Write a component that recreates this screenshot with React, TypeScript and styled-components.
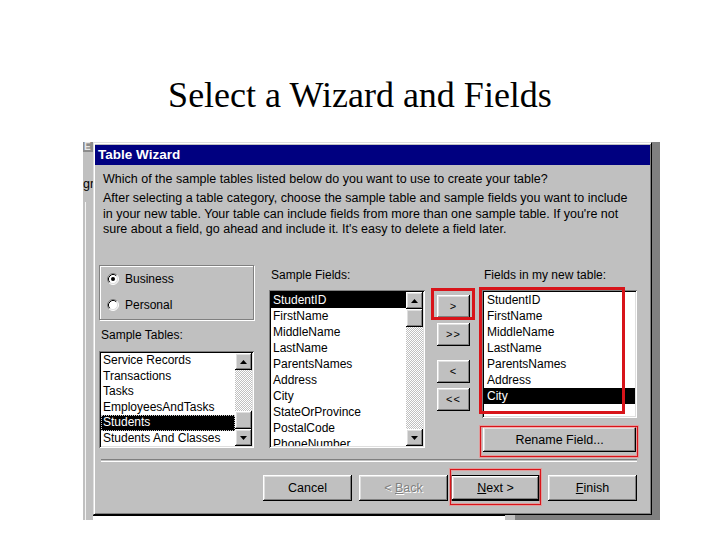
import React from 'react';
import styled, { createGlobalStyle } from 'styled-components';

const ui = `"Liberation Sans", Arial, sans-serif`;

const GlobalStyle = createGlobalStyle`
  html, body {
    margin: 0;
    background: #fff;
  }
`;

const raised = `
  box-shadow: inset -1px -1px #000, inset 1px 1px #fff, inset -2px -2px #808080, inset 2px 2px #dfdfdf;
`;

const sunken = `
  box-shadow: inset 1px 1px #808080, inset -1px -1px #fff, inset 2px 2px #000, inset -2px -2px #dfdfdf;
`;

const Slide = styled.div`
  width: 720px;
  height: 540px;
  overflow: hidden;
  background: #fff;
  display: flex;
  flex-direction: column;
`;

const Title = styled.h1`
  margin: 75px 0 0;
  height: 40px;
  font: 400 36px/40px "Liberation Serif", "Times New Roman", serif;
  color: #000;
  text-align: center;
`;

const Screen = styled.div`
  margin: 27px 0 0 83px;
  width: 577px;
  height: 378px;
  display: grid;
  grid-template-columns: 10px 559px 8px;
  grid-template-rows: 373px 5px;
`;

/* the window left behind the wizard */
const BgWindow = styled.div`
  grid-column: 1;
  grid-row: 1 / 3;
  background: #c0c0c0;
  display: flex;
  flex-direction: column;
  overflow: hidden;
  font-family: ${ui};
`;

const BgTitleBit = styled.div`
  height: 10px;
  background: #8c8c8c;
  color: #e8e8e8;
  font: 700 10px/10px ${ui};
  padding-left: 1px;
`;

const BgText = styled.div`
  margin-top: 25px;
  font-size: 12.5px;
  line-height: 15px;
  color: #000;
  white-space: nowrap;
`;

const BgEdge = styled.div`
  flex: 1;
  margin: 10px 0 0 2px;
  border-left: 1px solid #f4f4f4;
`;

const DarkStrip = styled.div`
  grid-column: 3;
  grid-row: 1 / 3;
  background: #808080;
`;

const UnderStrip = styled.div`
  grid-column: 2;
  grid-row: 2;
  display: flex;
`;

const UnderPiece = styled.div<{ $w?: number; $bg: string; $line?: boolean }>`
  ${(p) => (p.$w ? `width: ${p.$w}px;` : 'flex: 1;')}
  background: ${(p) => p.$bg};
  ${(p) => (p.$line ? 'border-top: 1px solid #000;' : '')}
`;

const Dialog = styled.div`
  grid-column: 2;
  grid-row: 1;
  box-sizing: border-box;
  display: flex;
  flex-direction: column;
  background: #c0c0c0;
  border: 1px solid;
  border-color: #dfdfdf #000 #000 #dfdfdf;
  box-shadow: inset 1px 1px #fff, inset -1px -1px #808080;
  padding: 2px 1px 0 1px;
  font-family: ${ui};
  color: #000;
`;

const TitleBar = styled.div`
  height: 20px;
  background: #000080;
  color: #fff;
  font: 700 13.5px/20px ${ui};
  padding-left: 3px;
`;

const Body = styled.div`
  flex: 1;
  display: flex;
  flex-direction: column;
  padding: 0 13px 0 4px;
`;

const Question = styled.p`
  margin: 7px 0 0 4px;
  font-size: 12.5px;
  line-height: 15.5px;
  white-space: nowrap;
`;

const Intro = styled.p`
  margin: 3.5px 0 0 4px;
  font-size: 12.5px;
  line-height: 15.5px;
  white-space: nowrap;
`;

const Main = styled.div`
  display: flex;
  align-items: flex-start;
  margin-top: 27.5px;
`;

const Column = styled.div<{ $w: number; $ml?: number }>`
  display: flex;
  flex-direction: column;
  width: ${(p) => p.$w}px;
  margin-left: ${(p) => p.$ml ?? 0}px;
`;

const GroupBox = styled.div`
  box-sizing: border-box;
  height: 55px;
  border: 1px solid #808080;
  box-shadow: inset 1px 1px #fff, 1px 1px #fff;
  padding: 5px 0 0 7px;
  display: flex;
  flex-direction: column;
  gap: 10px;
`;

const RadioRow = styled.label`
  display: flex;
  align-items: center;
  gap: 6px;
  height: 16px;
  font-size: 12px;
  line-height: 16px;
`;

const Label = styled.div<{ $mt: number; $ml?: number }>`
  margin: ${(p) => p.$mt}px 0 0 ${(p) => p.$ml ?? 2}px;
  font-size: 12px;
  line-height: 16px;
  white-space: nowrap;
`;

const ListBox = styled.div<{ $h: number; $mt: number }>`
  box-sizing: border-box;
  height: ${(p) => p.$h}px;
  margin-top: ${(p) => p.$mt}px;
  padding: 2px;
  background: #fff;
  ${sunken}
  display: flex;
`;

const Items = styled.ul`
  flex: 1;
  margin: 0;
  padding: 0;
  list-style: none;
  overflow: hidden;
`;

const Item = styled.li<{ $sel?: boolean; $focus?: boolean; $pl?: number; $h?: number }>`
  height: ${(p) => p.$h ?? 16}px;
  padding-left: ${(p) => p.$pl ?? 2}px;
  font-size: 12px;
  line-height: ${(p) => p.$h ?? 16}px;
  white-space: nowrap;
  background: ${(p) => (p.$sel ? '#000' : 'transparent')};
  color: ${(p) => (p.$sel ? '#fff' : '#000')};
  ${(p) => (p.$focus ? 'outline: 1px dotted #c8c8c8; outline-offset: -1px;' : '')}
`;

const ScrollBar = styled.div`
  width: 17px;
  display: flex;
  flex-direction: column;
`;

const ScrollBtn = styled.div`
  height: 17px;
  background: #c0c0c0;
  ${raised}
  display: flex;
  align-items: center;
  justify-content: center;
`;

const Track = styled.div<{ $end?: boolean }>`
  flex: 1;
  display: flex;
  flex-direction: column;
  justify-content: ${(p) => (p.$end ? 'flex-end' : 'flex-start')};
  background-color: #c0c0c0;
  background-image: repeating-conic-gradient(#fff 0% 25%, #c0c0c0 0% 50%);
  background-size: 2px 2px;
`;

const Thumb = styled.div`
  height: 18px;
  background: #c0c0c0;
  ${raised}
`;

const MoveStack = styled.div`
  display: flex;
  flex-direction: column;
  margin-top: 30px;
`;

const MoveButton = styled.div<{ $mt?: number }>`
  width: 33px;
  height: 23px;
  margin-top: ${(p) => p.$mt ?? 0}px;
  background: #c0c0c0;
  ${raised}
  font: 11px/23px ${ui};
  letter-spacing: 1px;
  text-align: center;
`;

const PushButton = styled.div<{ $w: number; $h: number; $default?: boolean; $disabled?: boolean }>`
  box-sizing: border-box;
  width: ${(p) => p.$w}px;
  height: ${(p) => p.$h}px;
  background: #c0c0c0;
  ${(p) =>
    p.$default
      ? 'border: 1px solid #000; box-shadow: inset -1px -1px #000, inset 1px 1px #fff, inset -2px -2px #808080, inset 2px 2px #dfdfdf;'
      : raised}
  display: flex;
  align-items: center;
  justify-content: center;
  font-size: 12.5px;
  color: ${(p) => (p.$disabled ? '#808080' : '#000')};
  text-shadow: ${(p) => (p.$disabled ? '1px 1px #fff' : 'none')};
  white-space: nowrap;
`;

const Mark = styled.div<{ $t: number; $r: number; $b: number; $l: number; $w: number; $glow?: boolean }>`
  position: relative;
  display: flex;

  &::after {
    content: '';
    position: absolute;
    top: ${(p) => -p.$t}px;
    right: ${(p) => -p.$r}px;
    bottom: ${(p) => -p.$b}px;
    left: ${(p) => -p.$l}px;
    border: ${(p) => p.$w}px solid #d8141a;
    box-shadow: ${(p) => (p.$glow ? '0 0 0 1px rgba(238, 140, 140, 0.7), inset 0 0 0 1px rgba(238, 140, 140, 0.7)' : 'none')};
    pointer-events: none;
  }
`;

const Separator = styled.div`
  margin: 7px 0 0 2px;
  width: 536px;
  height: 1px;
  border-top: 1px solid #808080;
  border-bottom: 1px solid #fff;
`;

const Footer = styled.div`
  display: flex;
  justify-content: flex-end;
  margin-top: 13px;
`;

const Gap = styled.span<{ $w: number }>`
  width: ${(p) => p.$w}px;
`;

const Radio = ({ checked }: { checked?: boolean }) => (
  <svg width="12" height="12" viewBox="0 0 12 12">
    <circle cx="6" cy="6" r="5" fill="#fff" />
    <path d="M9.89 2.11 A5.5 5.5 0 0 0 2.11 9.89" fill="none" stroke="#808080" strokeWidth="1" />
    <path d="M2.11 9.89 A5.5 5.5 0 0 0 9.89 2.11" fill="none" stroke="#fff" strokeWidth="1" />
    <path d="M9.18 2.82 A4.5 4.5 0 0 0 2.82 9.18" fill="none" stroke="#000" strokeWidth="1" />
    <path d="M2.82 9.18 A4.5 4.5 0 0 0 9.18 2.82" fill="none" stroke="#dfdfdf" strokeWidth="1" />
    {checked && <circle cx="6" cy="6" r="2" fill="#000" />}
  </svg>
);

const Arrow = ({ down }: { down?: boolean }) => (
  <svg width="7" height="4" viewBox="0 0 7 4">
    <polygon points={down ? '0,0 7,0 3.5,4' : '3.5,0 7,4 0,4'} fill="#000" />
  </svg>
);

const Scroller = ({ end }: { end?: boolean }) => (
  <ScrollBar>
    <ScrollBtn>
      <Arrow />
    </ScrollBtn>
    <Track $end={end}>
      <Thumb />
    </Track>
    <ScrollBtn>
      <Arrow down />
    </ScrollBtn>
  </ScrollBar>
);

const sampleTables = ['Service Records', 'Transactions', 'Tasks', 'EmployeesAndTasks', 'Students', 'Students And Classes'];
const sampleFields = [
  'StudentID',
  'FirstName',
  'MiddleName',
  'LastName',
  'ParentsNames',
  'Address',
  'City',
  'StateOrProvince',
  'PostalCode',
  'PhoneNumber',
];
const newFields = ['StudentID', 'FirstName', 'MiddleName', 'LastName', 'ParentsNames', 'Address', 'City'];

const App: React.FC = (): React.ReactElement => {
  return (
    <Slide>
      <GlobalStyle />
      <Title>Select a Wizard and Fields</Title>
      <Screen>
        <BgWindow>
          <BgTitleBit>E</BgTitleBit>
          <BgText>gr</BgText>
          <BgEdge />
        </BgWindow>

        <Dialog>
          <TitleBar>Table Wizard</TitleBar>
          <Body>
            <Question>Which of the sample tables listed below do you want to use to create your table?</Question>
            <Intro>
              After selecting a table category, choose the sample table and sample fields you want to include
              <br />
              in your new table. Your table can include fields from more than one sample table. If you're not
              <br />
              sure about a field, go ahead and include it. It's easy to delete a field later.
            </Intro>

            <Main>
              <Column $w={155}>
                <GroupBox>
                  <RadioRow>
                    <Radio checked />
                    Business
                  </RadioRow>
                  <RadioRow>
                    <Radio />
                    Personal
                  </RadioRow>
                </GroupBox>
                <Label $mt={7}>Sample Tables:</Label>
                <ListBox $h={97} $mt={8}>
                  <Items>
                    {sampleTables.map((t) => (
                      <Item key={t} $h={15.5} $sel={t === 'Students'} $focus={t === 'Students'}>
                        {t}
                      </Item>
                    ))}
                  </Items>
                  <Scroller end />
                </ListBox>
              </Column>

              <Column $w={156} $ml={15}>
                <Label $mt={2}>Sample Fields:</Label>
                <ListBox $h={158} $mt={7}>
                  <Items>
                    {sampleFields.map((f, i) => (
                      <Item key={f} $sel={i === 0}>
                        {f}
                      </Item>
                    ))}
                  </Items>
                  <Scroller />
                </ListBox>
              </Column>

              <Column $w={33} $ml={12}>
                <MoveStack>
                  <Mark $t={7} $r={5} $b={2} $l={6} $w={3}>
                    <MoveButton>&gt;</MoveButton>
                  </Mark>
                  <MoveButton $mt={5}>&gt;&gt;</MoveButton>
                  <MoveButton $mt={14}>&lt;</MoveButton>
                  <MoveButton $mt={5}>&lt;&lt;</MoveButton>
                </MoveStack>
              </Column>

              <Column $w={155} $ml={12}>
                <Label $mt={2}>Fields in my new table:</Label>
                <Mark $t={3} $r={-12} $b={-4} $l={3} $w={3} style={{ marginTop: 7 }}>
                  <ListBox $h={128} $mt={0} style={{ flex: 1 }}>
                    <Items>
                      {newFields.map((f) => (
                        <Item key={f} $sel={f === 'City'} $pl={3}>
                          {f}
                        </Item>
                      ))}
                    </Items>
                  </ListBox>
                </Mark>
                <Mark $t={1} $r={1} $b={5} $l={3} $w={1} $glow style={{ marginTop: 9, marginLeft: 1 }}>
                  <PushButton $w={153} $h={25}>
                    Rename Field...
                  </PushButton>
                </Mark>
              </Column>
            </Main>

            <Separator />

            <Footer>
              <PushButton $w={89} $h={26}>
                Cancel
              </PushButton>
              <Gap $w={7} />
              <PushButton $w={89} $h={26} $disabled>
                &lt;&nbsp;<u>B</u>ack
              </PushButton>
              <Gap $w={3} />
              <Mark $t={6} $r={1} $b={4} $l={1} $w={1} $glow>
                <PushButton $w={89} $h={26} $default>
                  <u>N</u>ext &gt;
                </PushButton>
              </Mark>
              <Gap $w={8} />
              <PushButton $w={89} $h={26}>
                <u>F</u>inish
              </PushButton>
            </Footer>
          </Body>
        </Dialog>

        <DarkStrip />

        <UnderStrip>
          <UnderPiece $w={412} $bg="#fff" $line />
          <UnderPiece $w={10} $bg="#c0c0c0" />
          <UnderPiece $bg="#808080" />
        </UnderStrip>
      </Screen>
    </Slide>
  );
};

export default App;
